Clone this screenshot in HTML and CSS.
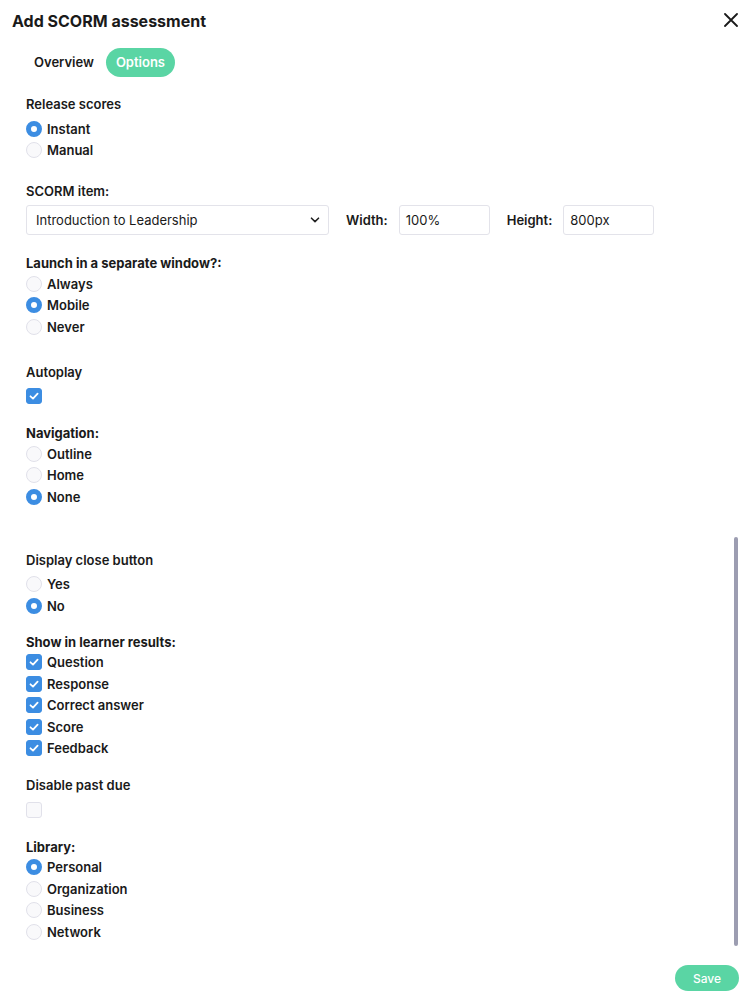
FILE: index.html
```html
<!doctype html>
<html lang="en">
  <head>
    <meta charset="UTF-8" />
    <meta name="viewport" content="width=device-width, initial-scale=1.0" />
    <title>Add SCORM assessment</title>
    <link rel="stylesheet" href="styles.css">
  </head>
  <body>
    <div class="modal">
      <div class="modal-header">
        <h2>Add SCORM assessment</h2>
        <button class="close-btn" aria-label="Close">
          <svg width="14" height="14" viewBox="0 0 14 14">
            <path d="M1 1L13 13M13 1L1 13" stroke="#1a1a1a" stroke-width="1.8" stroke-linecap="round" />
          </svg>
        </button>
      </div>

      <div class="tabs">
        <span class="tab">Overview</span>
        <span class="tab active">Options</span>
      </div>

      <div class="modal-body">
        <div class="field">
          <div class="field-label">Release scores</div>
          <label class="option"><span class="radio checked"></span>Instant</label>
          <label class="option"><span class="radio"></span>Manual</label>
        </div>

        <div class="field field-scorm">
          <div class="field-label">SCORM item:</div>
          <div class="scorm-row">
            <div class="select">
              <span>Introduction to Leadership</span>
              <svg width="10" height="6" viewBox="0 0 10 6">
                <path d="M1.5 1.2L5 4.6L8.5 1.2" fill="none" stroke="#222" stroke-width="1.6" stroke-linecap="round" stroke-linejoin="round" />
              </svg>
            </div>
            <span class="inline-label">Width:</span>
            <div class="text-input">100%</div>
            <span class="inline-label">Height:</span>
            <div class="text-input">800px</div>
          </div>
        </div>

        <div class="field field-launch">
          <div class="group-label">Launch in a separate window?:</div>
          <label class="option"><span class="radio"></span>Always</label>
          <label class="option"><span class="radio checked"></span>Mobile</label>
          <label class="option"><span class="radio"></span>Never</label>
        </div>

        <div class="field field-autoplay">
          <div class="field-label">Autoplay</div>
          <label class="option"><span class="checkbox checked"><svg width="12" height="12" viewBox="0 0 12 12"><path d="M2.5 6.3L5 8.6L9.6 3.6" fill="none" stroke="#fff" stroke-width="1.8" stroke-linecap="round" stroke-linejoin="round" /></svg></span></label>
        </div>

        <div class="field">
          <div class="group-label">Navigation:</div>
          <label class="option"><span class="radio"></span>Outline</label>
          <label class="option"><span class="radio"></span>Home</label>
          <label class="option"><span class="radio checked"></span>None</label>
        </div>

        <div class="field field-display">
          <div class="field-label">Display close button</div>
          <label class="option"><span class="radio"></span>Yes</label>
          <label class="option"><span class="radio checked"></span>No</label>
        </div>

        <div class="field field-results">
          <div class="group-label">Show in learner results:</div>
          <label class="option"><span class="checkbox checked"><svg width="12" height="12" viewBox="0 0 12 12"><path d="M2.5 6.3L5 8.6L9.6 3.6" fill="none" stroke="#fff" stroke-width="1.8" stroke-linecap="round" stroke-linejoin="round" /></svg></span>Question</label>
          <label class="option"><span class="checkbox checked"><svg width="12" height="12" viewBox="0 0 12 12"><path d="M2.5 6.3L5 8.6L9.6 3.6" fill="none" stroke="#fff" stroke-width="1.8" stroke-linecap="round" stroke-linejoin="round" /></svg></span>Response</label>
          <label class="option"><span class="checkbox checked"><svg width="12" height="12" viewBox="0 0 12 12"><path d="M2.5 6.3L5 8.6L9.6 3.6" fill="none" stroke="#fff" stroke-width="1.8" stroke-linecap="round" stroke-linejoin="round" /></svg></span>Correct answer</label>
          <label class="option"><span class="checkbox checked"><svg width="12" height="12" viewBox="0 0 12 12"><path d="M2.5 6.3L5 8.6L9.6 3.6" fill="none" stroke="#fff" stroke-width="1.8" stroke-linecap="round" stroke-linejoin="round" /></svg></span>Score</label>
          <label class="option"><span class="checkbox checked"><svg width="12" height="12" viewBox="0 0 12 12"><path d="M2.5 6.3L5 8.6L9.6 3.6" fill="none" stroke="#fff" stroke-width="1.8" stroke-linecap="round" stroke-linejoin="round" /></svg></span>Feedback</label>
        </div>

        <div class="field">
          <div class="field-label">Disable past due</div>
          <label class="option"><span class="checkbox"></span></label>
        </div>

        <div class="field">
          <div class="group-label">Library:</div>
          <label class="option"><span class="radio checked"></span>Personal</label>
          <label class="option"><span class="radio"></span>Organization</label>
          <label class="option"><span class="radio"></span>Business</label>
          <label class="option"><span class="radio"></span>Network</label>
        </div>

        <div class="scrollbar"></div>
      </div>

      <div class="modal-footer">
        <button class="save-btn">Save</button>
      </div>
    </div>
  </body>
</html>
```

FILE: styles.css
```css
body {
  margin: 0;
  background: #fff;
  color: #1a1a1a;
  font-family: Inter, "Open Sans", sans-serif;
}
.modal {
  width: 750px;
  height: 1008px;
  position: relative;
}
.modal-header {
  display: flex;
  justify-content: space-between;
  align-items: center;
  height: 42px;
  padding: 0 12px;
}
.modal-header h2 {
  margin: 0;
  font-size: 16px;
  font-weight: 700;
}
.close-btn {
  border: none;
  background: none;
  padding: 0;
  width: 14px;
  height: 14px;
  margin-top: -2px;
  cursor: pointer;
}
.tabs {
  display: flex;
  gap: 4px;
  padding: 6px 0 0 26px;
}
.tab {
  height: 29px;
  line-height: 29px;
  padding: 0 8px;
  border-radius: 15px;
  font-size: 13px;
  font-weight: 600;
}
.tab.active {
  padding: 0 10px;
  background: #5ad5a4;
  color: #fff;
}
.modal-body {
  position: relative;
  padding: 0 26px;
}
.field {
  margin-top: 16px;
}
.field:first-child {
  margin-top: 17px;
}
.field-scorm {
  margin-top: 20px;
}
.field-launch {
  margin-top: 18px;
}
.field-autoplay {
  margin-top: 24px;
}
.field-display {
  margin-top: 42px;
}
.field-results {
  margin-top: 15px;
}
.field-label {
  font-size: 13px;
  font-weight: 600;
  line-height: 20px;
  margin-bottom: 4px;
}
.group-label {
  font-size: 13px;
  font-weight: 700;
  line-height: 20px;
}
.option {
  display: flex;
  align-items: center;
  gap: 5px;
  height: 21.5px;
  font-size: 13px;
  font-weight: 600;
}
.radio {
  width: 16px;
  height: 16px;
  box-sizing: border-box;
  border-radius: 50%;
  border: 1px solid #e1e1ea;
  background: #f9f9fb;
}
.radio.checked {
  border: 5px solid #3c8de2;
  background: #fff;
}
.checkbox {
  width: 16px;
  height: 16px;
  box-sizing: border-box;
  border-radius: 3px;
  border: 1px solid #e1e1ea;
  background: #f9f9fb;
  display: flex;
  align-items: center;
  justify-content: center;
}
.checkbox.checked {
  border-color: #3c8de2;
  background: #3c8de2;
}
.scorm-row {
  display: flex;
  align-items: center;
}
.select {
  width: 303px;
  height: 30px;
  box-sizing: border-box;
  border: 1px solid #e3e3ea;
  border-radius: 3px;
  padding: 0 8px 0 9px;
  display: flex;
  align-items: center;
  justify-content: space-between;
  font-size: 13px;
}
.inline-label {
  font-size: 13px;
  font-weight: 600;
  margin: 0 11px 0 17px;
}
.text-input {
  width: 91px;
  height: 30px;
  box-sizing: border-box;
  border: 1px solid #e3e3ea;
  border-radius: 3px;
  padding: 0 6px;
  display: flex;
  align-items: center;
  font-size: 13px;
}
.scrollbar {
  position: absolute;
  right: 12px;
  top: 443px;
  width: 4px;
  height: 409px;
  border-radius: 2px;
  background: #9c9db1;
}
.modal-footer {
  position: absolute;
  right: 11px;
  bottom: 17px;
}
.save-btn {
  width: 64px;
  height: 26px;
  border: none;
  border-radius: 13px;
  background: #5ad5a4;
  color: #fff;
  font-family: inherit;
  font-size: 12px;
  font-weight: 500;
  cursor: pointer;
}
```
